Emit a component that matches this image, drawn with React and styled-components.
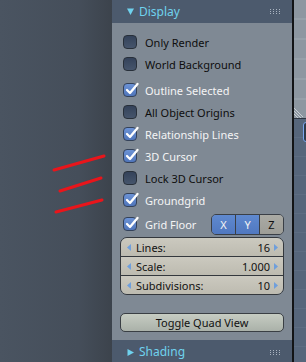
import styled, { createGlobalStyle } from 'styled-components'

const GlobalStyle = createGlobalStyle`
  html, body {
    margin: 0;
    padding: 0;
    background: #434c57;
  }
  body {
    font-family: "Noto Sans", "Open Sans", "DejaVu Sans", sans-serif;
  }
`

const Screen = styled.div`
  display: flex;
  width: 306px;
  height: 362px;
  overflow: hidden;
`

const Viewport = styled.div`
  position: relative;
  width: 112px;
  flex-shrink: 0;
  background: linear-gradient(to right, #4a5461 0%, #454e5a 70%, #3c434c 100%);
`

const Annotation = styled.svg`
  position: absolute;
  left: 0;
  top: 0;
`

const Panel = styled.div`
  width: 180px;
  flex-shrink: 0;
  display: flex;
  flex-direction: column;
  background: #7f8994;
`

const Header = styled.div`
  height: ${p => p.$h}px;
  flex-shrink: 0;
  display: flex;
  align-items: center;
  padding: 0 11px 0 14px;
  background: #4c5a6d;
  color: #6fd2ee;
  font-size: 12px;
  gap: 4px;
`

const HeaderTitle = styled.span`
  flex: 1;
  line-height: 1;
`

const Body = styled.div`
  display: flex;
  flex-direction: column;
  padding: 8px;
`

const Row = styled.div`
  display: flex;
  align-items: center;
  height: 22px;
  padding-left: 3px;
  margin-top: ${p => p.$gap || 0}px;
  font-size: 11px;
  color: ${p => (p.$on ? '#f4f4f4' : '#0e0e0e')};
`

const Box = styled.span`
  width: 14px;
  height: 14px;
  box-sizing: border-box;
  border-radius: 4px;
  border: 1px solid ${p => (p.$on ? '#34425a' : '#28303a')};
  background: ${p =>
    p.$on
      ? 'linear-gradient(#6c93d6, #4f75ba)'
      : 'linear-gradient(#34425a, #46556c)'};
  margin-right: 8px;
  position: relative;
  flex-shrink: 0;
`

const Tick = styled.svg`
  position: absolute;
  left: 0;
  top: -3px;
  overflow: visible;
`

const AxisGroup = styled.div`
  display: flex;
  margin-left: auto;
  height: 19px;
  border: 1px solid #3a3f46;
  border-radius: 5px;
  overflow: hidden;
`

const AxisButton = styled.span`
  width: 23px;
  display: flex;
  align-items: center;
  justify-content: center;
  font-size: 11px;
  color: ${p => (p.$on ? '#f4f4f4' : '#111')};
  background: ${p =>
    p.$on ? 'linear-gradient(#5f89cf, #5078c0)' : 'linear-gradient(#aaaaa4, #9d9d97)'};
  & + & {
    border-left: 1px solid #3a3f46;
  }
`

const NumGroup = styled.div`
  margin-top: 2px;
  display: flex;
  flex-direction: column;
  border: 1px solid #34383d;
  border-radius: 7px;
  overflow: hidden;
`

const NumField = styled.div`
  height: 18px;
  display: flex;
  align-items: center;
  padding: 0 5px 0 6px;
  font-size: 11px;
  color: #111;
  background: linear-gradient(#cbc9bf, #bdbbb0);
  & + & {
    border-top: 1px solid #34383d;
  }
`

const Label = styled.span`
  flex: 1;
  margin-left: 5px;
`

const Value = styled.span`
  margin-right: 4px;
`

const ToggleButton = styled.div`
  margin-top: 18px;
  height: 19px;
  box-sizing: border-box;
  display: flex;
  align-items: center;
  justify-content: center;
  border: 1px solid #3a3f44;
  border-radius: 5px;
  font-size: 11px;
  color: #111;
  background: linear-gradient(#c6ccc2, #aab1a9);
`

const Divider = styled.div`
  width: 2px;
  flex-shrink: 0;
  background: #121416;
`

const SideStrip = styled.div`
  flex: 1;
  display: flex;
  flex-direction: column;
`

const SideTop = styled.div`
  height: 118px;
  position: relative;
  background: repeating-linear-gradient(#8d97a1 0px, #8d97a1 18px, #96a0a9 18px, #96a0a9 20px);
  border-bottom: 1px solid #2c3440;
`

const Hatch = styled.svg`
  position: absolute;
  left: 0;
  bottom: 0;
`

const SideBottom = styled.div`
  flex: 1;
  padding-top: 3px;
  padding-left: 9px;
  background: repeating-linear-gradient(#56667b 0px, #56667b 18px, #5d6d82 18px, #5d6d82 19px);
`

const SideButton = styled.div`
  width: 10px;
  height: 18px;
  border: 1px solid #7aa6ee;
  border-radius: 3px;
  background: #2f3a4a;
`

function Triangle({ dir }) {
  return (
    <svg width="9" height="9" viewBox="0 0 9 9">
      {dir === 'down' ? (
        <polygon points="1,1.5 8,1.5 4.5,8" fill="#6fd2ee" />
      ) : (
        <polygon points="1.5,1 8,4.5 1.5,8" fill="#6fd2ee" />
      )}
    </svg>
  )
}

function Grip() {
  const dots = []
  for (let r = 0; r < 3; r++)
    for (let c = 0; c < 4; c++)
      dots.push(<rect key={r + '-' + c} x={c * 3} y={r * 2} width="1" height="1" fill="#a9b3c0" />)
  return <svg width="11" height="5">{dots}</svg>
}

function Check({ on, label, gap, children }) {
  return (
    <Row $on={on} $gap={gap}>
      <Box $on={on}>
        {on && (
          <Tick width="15" height="15" viewBox="0 0 15 15">
            <path d="M3 9 L6 12 L13.5 3" fill="none" stroke="#fff" strokeWidth="2.3" strokeLinecap="round" strokeLinejoin="round" />
          </Tick>
        )}
      </Box>
      {label}
      {children}
    </Row>
  )
}

function Arrow({ dir }) {
  return (
    <svg width="4" height="7" viewBox="0 0 4 7">
      {dir === 'left' ? (
        <polygon points="4,0 0,3.5 4,7" fill="#6f9fdc" />
      ) : (
        <polygon points="0,0 4,3.5 0,7" fill="#6f9fdc" />
      )}
    </svg>
  )
}

const numbers = [
  { label: 'Lines:', value: '16' },
  { label: 'Scale:', value: '1.000' },
  { label: 'Subdivisions:', value: '10' },
]

export default function App() {
  return (
    <Screen>
      <GlobalStyle />
      <Viewport>
        <Annotation width="112" height="362">
          <g stroke="#e9151b" strokeWidth="3" strokeLinecap="round">
            <line x1="54" y1="170" x2="104" y2="156" />
            <line x1="60" y1="191" x2="101" y2="178" />
            <line x1="56" y1="212" x2="102" y2="200" />
          </g>
        </Annotation>
      </Viewport>
      <Panel>
        <Header $h={23}>
          <Triangle dir="down" />
          <HeaderTitle>Display</HeaderTitle>
          <Grip />
        </Header>
        <Body>
          <Check label="Only Render" />
          <Check label="World Background" />
          <Check on label="Outline Selected" gap={4} />
          <Check label="All Object Origins" />
          <Check on label="Relationship Lines" />
          <Check on label="3D Cursor" />
          <Check label="Lock 3D Cursor" />
          <Check on label="Groundgrid" />
          <Check on label="Grid Floor" gap={2}>
            <AxisGroup>
              <AxisButton $on>X</AxisButton>
              <AxisButton $on>Y</AxisButton>
              <AxisButton>Z</AxisButton>
            </AxisGroup>
          </Check>
          <NumGroup>
            {numbers.map(n => (
              <NumField key={n.label}>
                <Arrow dir="left" />
                <Label>{n.label}</Label>
                <Value>{n.value}</Value>
                <Arrow dir="right" />
              </NumField>
            ))}
          </NumGroup>
          <ToggleButton>Toggle Quad View</ToggleButton>
        </Body>
        <Header $h={24}>
          <Triangle dir="right" />
          <HeaderTitle>Shading</HeaderTitle>
          <Grip />
        </Header>
      </Panel>
      <Divider />
      <SideStrip>
        <SideTop>
          <Hatch width="9" height="10" viewBox="0 0 9 10">
            <g stroke="#c8ced4" strokeWidth="1">
              <line x1="0" y1="3" x2="7" y2="10" />
              <line x1="0" y1="6" x2="4" y2="10" />
              <line x1="0" y1="0" x2="10" y2="10" />
            </g>
          </Hatch>
        </SideTop>
        <SideBottom>
          <SideButton />
        </SideBottom>
      </SideStrip>
    </Screen>
  )
}
